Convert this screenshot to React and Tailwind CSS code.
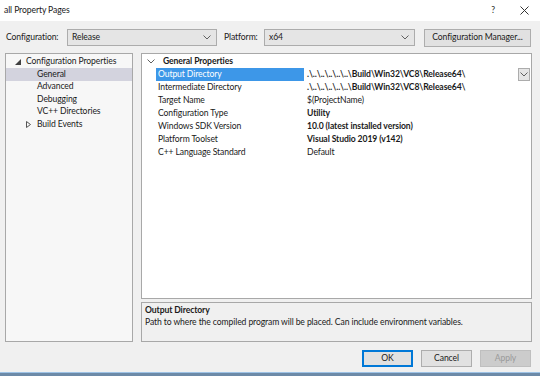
import React from "react";

const Chevron = ({ className = "" }) => (
  <svg width="8" height="5" viewBox="0 0 8 5" className={className}>
    <path d="M0.5 0.5 L4 4 L7.5 0.5" fill="none" stroke="#606060" strokeWidth="1" />
  </svg>
);

const Select = ({ value, w }) => (
  <div className={`flex items-center justify-between h-[17px] bg-[#e5e5e5] border border-[#acacac] pl-[4px] pr-[5px] ${w}`}>
    <span>{value}</span>
    <Chevron />
  </div>
);

const treeItems = [
  { label: "General", sel: true },
  { label: "Advanced" },
  { label: "Debugging" },
  { label: "VC++ Directories" },
  { label: "Build Events", arrow: true },
];

const props = [
  ["Output Directory", ".\\..\\..\\..\\..\\..\\Build\\Win32\\VC8\\Release64\\", true, true],
  ["Intermediate Directory", ".\\..\\..\\..\\..\\..\\Build\\Win32\\VC8\\Release64\\", true],
  ["Target Name", "$(ProjectName)", false],
  ["Configuration Type", "Utility", true],
  ["Windows SDK Version", "10.0 (latest installed version)", true],
  ["Platform Toolset", "Visual Studio 2019 (v142)", true],
  ["C++ Language Standard", "Default", false],
];

export default function App() {
  return (
    <div
      className="w-[540px] h-[376px] flex flex-col bg-[#f0f0f0] text-[8.6px] tracking-[-0.1px] text-[#1a1a1a] overflow-hidden"
      style={{ fontFamily: 'Lato, "Noto Sans", sans-serif' }}
    >
      {/* Title bar */}
      <div className="h-[21px] bg-white flex items-center pl-[4px] pr-[11px] shrink-0">
        <span className="flex-1">all Property Pages</span>
        <span className="w-[10px] text-center mr-[22px]">?</span>
        <svg width="9" height="9" viewBox="0 0 9 9">
          <path d="M0.5 0.5 L8.5 8.5 M8.5 0.5 L0.5 8.5" stroke="#333" strokeWidth="1" />
        </svg>
      </div>

      {/* Toolbar */}
      <div className="h-[32px] flex items-center pl-[6px] pr-[9px] shrink-0 pt-[1px]">
        <span className="w-[61px]">Configuration:</span>
        <Select value="Release" w="w-[150px]" />
        <span className="ml-[7px] w-[40px]">Platform:</span>
        <Select value="x64" w="w-[151px]" />
        <div className="ml-[9px] flex-1 h-[18px] bg-[#e1e1e1] border border-[#adadad] flex items-center justify-center">
          Configuration Manager...
        </div>
      </div>

      {/* Main */}
      <div className="flex pl-[5px] pr-[8px] gap-[8px] h-[289px] shrink-0">
        {/* Tree */}
        <div className="w-[128px] bg-[#f7f7f7] border border-[#a8a8a8] pt-[1px] flex flex-col">
          <div className="h-[13px] flex items-center pl-[9px]">
            <svg width="6" height="6" viewBox="0 0 6 6" className="mr-[5px]">
              <path d="M6 0 L6 6 L0 6 Z" fill="#404040" />
            </svg>
            <span>Configuration Properties</span>
          </div>
          {treeItems.map((t) => (
            <div
              key={t.label}
              className={`h-[12.5px] flex items-center pl-[31px] relative ${t.sel ? "bg-[#d3d3de]" : ""}`}
            >
              {t.arrow && (
                <svg width="5" height="7" viewBox="0 0 5 7" className="absolute left-[20px] top-[3px]">
                  <path d="M0.5 0.5 L4.5 3.5 L0.5 6.5 Z" fill="none" stroke="#555" strokeWidth="1" />
                </svg>
              )}
              <span>{t.label}</span>
            </div>
          ))}
        </div>

        {/* Right column */}
        <div className="flex-1 flex flex-col gap-[3px]">
          <div className="h-[247px] bg-white border border-[#a8a8a8] pt-[1px] flex flex-col">
            <div className="h-[13px] flex items-center pl-[5px] font-bold">
              <Chevron className="mr-[8px]" />
              <span>General Properties</span>
            </div>
            {props.map(([name, val, bold, sel]) => (
              <div key={name} className="h-[13px] flex items-center">
                <div
                  className={`w-[148px] ml-[14px] h-full flex items-center pl-[2px] ${sel ? "bg-[#3d97e8] text-white" : ""}`}
                >
                  {name}
                </div>
                <div className={`flex-1 h-full flex items-center pl-[3px] ${bold ? "font-bold" : ""}`}>
                  <span className="flex-1">{val}</span>
                  {sel && (
                    <div className="w-[12px] h-[13px] bg-[#e5e5e5] border border-[#acacac] flex items-center justify-center mr-[1px]">
                      <Chevron />
                    </div>
                  )}
                </div>
              </div>
            ))}
          </div>
          <div className="h-[40px] bg-[#f0f0f0] border border-[#a8a8a8] px-[3px] pt-[1px] leading-[12px]">
            <div className="font-bold">Output Directory</div>
            <div>Path to where the compiled program will be placed. Can include environment variables.</div>
          </div>
        </div>
      </div>

      {/* Buttons */}
      <div className="flex justify-end pr-[9px] pt-[8px] gap-[8px] shrink-0">
        <div className="w-[51px] h-[17px] bg-[#e1e1e1] border-2 border-[#0078d7] flex items-center justify-center">OK</div>
        <div className="w-[51px] h-[17px] bg-[#e1e1e1] border border-[#adadad] flex items-center justify-center">Cancel</div>
        <div className="w-[51px] h-[17px] bg-[#cccccc] border border-[#bfbfbf] text-[#9a9a9a] flex items-center justify-center">Apply</div>
      </div>

      <div className="flex-1" />
      <div className="h-[1px] bg-[#9ec3e6] shrink-0" />
      <div className="h-[3px] bg-[#6d8aa8] shrink-0" />
    </div>
  );
}
